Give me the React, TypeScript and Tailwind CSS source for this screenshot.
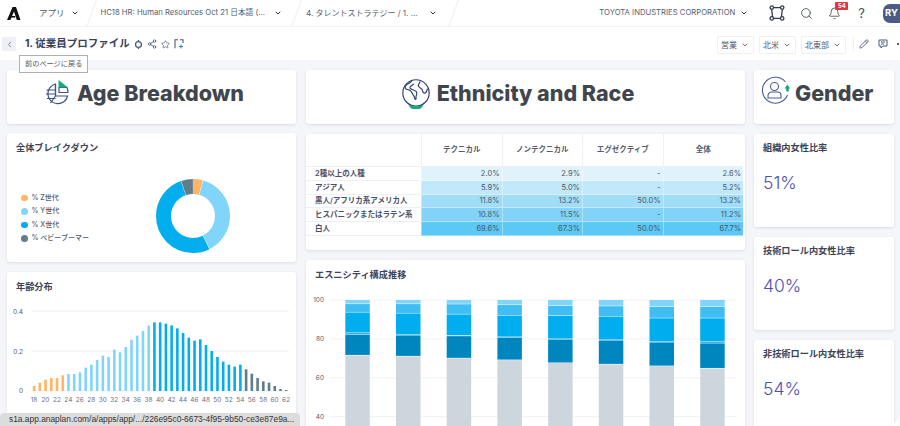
import React from 'react';
import { ChevronDown, ChevronLeft, Search, Bell, Share2, Star, Pencil } from 'lucide-react';

const font = { fontFamily: 'Inter, "Noto Sans CJK JP", sans-serif' };

const ageTops = [346, 336, 327, 322, 322, 314, 310, 310, 305, 291, 282, 268, 255, 259, 237, 245, 229, 207, 195, 181, 165, 155, 155, 159, 164, 173, 187, 201, 210, 206, 223, 241, 259, 273, 282, 288, 282, 296, 309, 322, 332, 336, 346, 355, 358];

const ageColor = (age: number) => {
  if (age < 24) return '#ffb562';
  if (age < 39) return '#81d4fa';
  if (age < 55) return '#03aeef';
  return '#607d8b';
};

const tableRows = [
  { label: '2種以上の人種', bg: 'bg-[#e0f3fc]', values: ['2.0%', '2.9%', '-', '2.6%'] },
  { label: 'アジア人', bg: 'bg-[#c0e8fa]', values: ['5.9%', '5.0%', '-', '5.2%'] },
  { label: '黒人/アフリカ系アメリカ人', bg: 'bg-[#a0ddf8]', values: ['11.8%', '13.2%', '50.0%', '13.2%'] },
  { label: 'ヒスパニックまたはラテン系', bg: 'bg-[#82d3f7]', values: ['10.8%', '11.5%', '-', '11.2%'] },
  { label: '白人', bg: 'bg-[#5cc8f5]', values: ['69.6%', '67.3%', '50.0%', '67.7%'] },
];

// tops of each segment in the stacked chart, read as % values
const stacks = [
  [71.5, 82.2, 83, 93.6, 97.9],
  [71, 81.8, 82, 93.1, 97.9],
  [70, 81.4, 81.6, 92.6, 97.8],
  [69.1, 80.7, 80.9, 92, 97.4],
  [67.6, 79.7, 79.9, 91.9, 97],
  [66.9, 79.2, 79.4, 91.5, 96.8],
  [66, 78.2, 78.4, 90.6, 96.4],
  [64.8, 77.7, 78.4, 90.6, 96.4],
];
const stackColors = ['#ccd6dc', '#0086bf', '#29a8dc', '#00aeef', '#40bdf3', '#81d4fa'];

const kpis = [
  { title: '組織内女性比率', value: '51%' },
  { title: '技術ロール内女性比率', value: '40%' },
  { title: '非技術ロール内女性比率', value: '54%' },
];

const Card = ({ className = '', children }: { className?: string; children?: React.ReactNode }) => (
  <div className={`bg-white rounded-[3px] shadow-[0_1px_3px_rgba(40,50,80,0.12)] ${className}`}>{children}</div>
);

const Slash = () => <div className="w-px h-[27px] bg-[#eceef3] -skew-x-[20deg]" />;

const Logo = () => (
  <svg width="14" height="13" viewBox="0 0 14 13">
    <path d="M5.6 0H9L13.5 13H9.8L7 4.6 3.4 13H0z" fill="#111" />
    <path d="M3.8 9h4.4v1.6H3.8z" fill="#111" />
  </svg>
);

const NetworkIcon = () => (
  <svg width="16" height="16" viewBox="0 0 16 16" fill="none" stroke="#333a4d" strokeWidth="1.3">
    <path d="M4 2.6h8M4 13.4h8M2.6 4l1 8M13.4 4l-1 8" />
    <circle cx="2.8" cy="2.6" r="1.7" />
    <circle cx="13.2" cy="2.6" r="1.7" />
    <circle cx="2.8" cy="13.4" r="1.7" />
    <circle cx="13.2" cy="13.4" r="1.7" />
  </svg>
);

const SyncIcon = () => (
  <svg width="9" height="9" viewBox="0 0 10 10" fill="none" stroke="#4d5a78" strokeWidth="1.4">
    <circle cx="5" cy="5" r="3.3" />
    <path d="M5 0v2M5 8v2" />
  </svg>
);

const BookmarkSpark = () => (
  <svg width="10" height="10" viewBox="0 0 10 10" fill="none" stroke="#4d5a78" strokeWidth="1.1">
    <path d="M4 .8H1v8.4M6 .8h3V4" />
    <path d="M7 5.5v4M5 7.5h4" stroke="#3f7fe0" />
  </svg>
);

const CommentIcon = () => (
  <svg width="10" height="10" viewBox="0 0 10 10" fill="none" stroke="#4d5a78" strokeWidth="1">
    <path d="M1 1h8v6H5L3 9V7H1z" />
    <path d="M3 3h4M3 5h3" />
  </svg>
);

const AgeIcon = () => (
  <svg width="24" height="26" viewBox="0 0 24 26" fill="none" stroke="#3f5288" strokeWidth="1.2" className="mb-[3px]">
    <path d="M10.5 5A10 10 0 1 0 22.6 17H10.5z" />
    <path d="M1.5 11h9M.8 15h9.7M2 19.5h8.5M10.5 5v12M10.5 17l-5 7" />
    <path d="M14 8.5h8A10 10 0 0 1 22.9 13.5H14z" />
    <path d="M13.5 1v7.5H23z" fill="#17a97a" stroke="none" />
  </svg>
);

const GlobeIcon = () => (
  <svg width="28" height="30" viewBox="0 0 26 28" fill="none" stroke="#2e3f76" strokeWidth="1.1">
    <circle cx="13" cy="13" r="12.3" />
    <path d="M9 1.8C8 4 5 4.5 3 6.5c-.7 2 .8 3.3 2.8 3.5 2.2.2 3 1.7 3.8 3.5.5 1.8 2 2.2 2.2 4.5.1 1.3 1.5 1.5 1.2-.5-.3-2.5 1.5-3.500.5-5.500-1.500-2-4.500-1.500-6-3.500C6.500 7 9.500 6 11 4.500" />
    <path d="M17 2.500c-1 1.500-2.500 2.500-1.500 4.500 1 1.500 3 1.500 3.500 3.500.5 1.800 1 3.300 2.500 2.500 1.500-1 2-2.500 2.200-4" />
    <path d="M5.500 23.500c4.500 2.500 10.500 2.500 15 0l-2.500 3.500c-2 2-8 2-10 0z" fill="#17a97a" stroke="none" />
  </svg>
);

const PersonIcon = () => (
  <svg width="29" height="29" viewBox="0 0 29 29" fill="none" stroke="#4a5c96" strokeWidth="1.1" className="mb-[6px]">
    <path d="M26.5 19A13 13 0 1 1 24.5 6" />
    <circle cx="13.5" cy="10.5" r="4" />
    <path d="M7 22v-2.500a3.500 3.500 0 0 1 3.500-3.500h6a3.500 3.500 0 0 1 3.500 3.500V22z" />
    <path d="M23.500 12.500L26.500 8.500l2.500 4h-1.200v3h-2.600v-3z" fill="#17a97a" stroke="none" />
  </svg>
);

const Donut = () => {
  const r = 29.5;
  const c = 2 * Math.PI * r;
  const parts = [
    { color: '#ffb562', from: 0, to: 4.5 },
    { color: '#81d4fa', from: 4.5, to: 42.6 },
    { color: '#03aeef', from: 42.6, to: 94.7 },
    { color: '#607d8b', from: 94.7, to: 100 },
  ];
  return (
    <svg width="76" height="76" viewBox="0 0 76 76" className="-rotate-90">
      {parts.map(p => (
        <circle
          key={p.color}
          cx="38"
          cy="38"
          r={r}
          fill="none"
          stroke={p.color}
          strokeWidth="15"
          strokeDasharray={`${((p.to - p.from) / 100) * c - 0.4} ${c}`}
          strokeDashoffset={-(p.from / 100) * c}
        />
      ))}
    </svg>
  );
};

const AgeChart = () => (
  <svg width="289" height="112" viewBox="0 0 289 112" className="block">
    <g stroke="#f0f1f5" strokeWidth="1">
      <line x1="24" x2="282" y1="11" y2="11" />
      <line x1="24" x2="282" y1="51" y2="51" />
      <line x1="24" x2="282" y1="91" y2="91" />
    </g>
    <g fontSize="6.5" fill="#555c70" textAnchor="end" style={font}>
      <text x="16" y="13.5">0.4</text>
      <text x="16" y="53.5">0.2</text>
      <text x="16" y="93">0</text>
    </g>
    {ageTops.map((top, i) => {
      const h = (361 - top) / 3;
      return <rect key={i} x={25.8 + i * 5.73} y={91 - h} width="2.6" height={h} fill={ageColor(18 + i)} />;
    })}
    <g fontSize="6.5" fill="#6b7280" textAnchor="middle" style={font}>
      {ageTops.map((_, i) =>
        i % 2 === 0 ? (
          <text key={i} x={27 + i * 5.73} y="102">
            {18 + i}
          </text>
        ) : null
      )}
    </g>
  </svg>
);

const StackChart = () => {
  const yOf = (v: number) => 5 + (100 - v) * 1.945;
  return (
    <svg width="439" height="135" viewBox="0 0 439 135" className="block">
      <g stroke="#f0f1f5" strokeWidth="1">
        {[100, 80, 60, 40].map(v => (
          <line key={v} x1="24" x2="431" y1={yOf(v)} y2={yOf(v)} />
        ))}
      </g>
      <g fontSize="6.5" fill="#555c70" textAnchor="end" style={font}>
        {[100, 80, 60, 40].map(v => (
          <text key={v} x="18" y={yOf(v) + 2.3}>
            {v}
          </text>
        ))}
      </g>
      {stacks.map((tops, i) => {
        const x = 39.3 + i * 50.7;
        const edges = [-30, ...tops, 100];
        return edges.slice(0, -1).map((from, j) => {
          const y1 = yOf(edges[j + 1]);
          const y2 = yOf(from);
          return <rect key={`${i}-${j}`} x={x} y={y1} width="24.5" height={y2 - y1 - 0.5} fill={stackColors[j]} />;
        });
      })}
    </svg>
  );
};

const App = () => {
  return (
    <div className="relative w-[900px] h-[426px] overflow-hidden rounded-br-[14px] bg-[#f5f6fa] text-[#3d4457]" style={font}>
      {/* top bar */}
      <div className="flex items-center h-[27px] bg-white border-b border-[#f1f2f6] pl-[7px] text-[#555c6e]">
        <div className="w-[32px]">
          <Logo />
        </div>
        <div className="flex items-center w-[52px] text-[8.5px]">
          <span>アプリ</span>
          <ChevronDown className="ml-[6px] w-[8px] h-[8px] text-[#333]" strokeWidth={3} />
        </div>
        <Slash />
        <div className="flex items-center ml-[8.5px] w-[195px] text-[7.7px]">
          <span className="whitespace-nowrap">HC18 HR: Human Resources Oct 21 日本語 (...</span>
          <ChevronDown className="ml-auto mr-[14px] w-[8px] h-[8px] text-[#333]" strokeWidth={3} />
        </div>
        <Slash />
        <div className="flex items-center ml-[9.5px] w-[147px] text-[8px]">
          <span className="whitespace-nowrap">4. タレントストラテジー / 1. ...</span>
          <ChevronDown className="ml-auto mr-[16px] w-[8px] h-[8px] text-[#333]" strokeWidth={3} />
        </div>
        <Slash />
        <div className="flex items-center ml-auto text-[7.7px]">
          <span className="whitespace-nowrap">TOYOTA INDUSTRIES CORPORATION</span>
          <ChevronDown className="ml-[5px] w-[8px] h-[8px] text-[#333]" strokeWidth={3} />
        </div>
        <div className="flex items-center ml-[21px]">
          <NetworkIcon />
          <Search className="ml-[15px] w-[13px] h-[13px] text-[#444b5c]" strokeWidth={1.6} />
          <div className="relative ml-[15px]">
            <Bell className="w-[13px] h-[13px] text-[#444b5c]" strokeWidth={1.6} />
            <span className="absolute left-[7px] -top-[5px] w-[13px] h-[8px] bg-[#e5323b] rounded-[1px] text-white text-[6px] font-bold leading-[8px] text-center">54</span>
          </div>
          <span className="ml-[17px] text-[13px] text-[#444b5c] leading-none">?</span>
          <div className="ml-[18px] -mr-[5px] w-[22px] h-[19px] rounded-[7px] bg-[#4b5b85] text-white text-[9.5px] font-bold flex items-center pl-[2px]">RY</div>
        </div>
      </div>

      {/* page title bar */}
      <div className="flex items-center h-[33px] bg-white pl-[2px] pt-[1px]">
        <div className="flex items-center justify-center w-[14px] h-[14px] bg-[#eef0f6] rounded-[1px]">
          <ChevronLeft className="w-[9px] h-[9px] text-[#667]" />
        </div>
        <span className="ml-[9px] text-[10.5px] font-bold text-[#39405a]">1. 従業員プロファイル</span>
        <div className="flex items-center ml-[4.5px] gap-[4px] text-[#4d5a78]">
          <SyncIcon />
          <Share2 className="w-[10px] h-[10px]" strokeWidth={2} />
          <Star className="w-[9px] h-[9px]" strokeWidth={1.8} />
          <BookmarkSpark />
        </div>
        <div className="flex items-center ml-auto pr-[1px] gap-[5px] text-[8px] text-[#4d5a78]">
          {[
            { name: '営業', width: 'w-[37px]' },
            { name: '北米', width: 'w-[37px]' },
            { name: '北東部', width: 'w-[45px]' },
          ].map(f => (
            <div key={f.name} className={`flex items-center justify-center h-[18px] mt-[1px] border border-[#eef0f6] rounded-[1px] ${f.width}`}>
              <span>{f.name}</span>
              <ChevronDown className="ml-[4px] w-[8px] h-[8px]" strokeWidth={2.5} />
            </div>
          ))}
          <div className="ml-[2px] w-px h-[14px] bg-[#eef0f6]" />
          <Pencil className="ml-[0.5px] w-[10px] h-[10px]" />
          <div className="ml-[4px] flex items-center gap-[9px]">
            <CommentIcon />
            <div className="w-[2px] h-[1.5px] bg-[#4d5a78]" />
          </div>
        </div>
      </div>

      {/* dashboard columns */}
      <div className="flex pl-[7px] pt-[10px]">
        <div className="flex flex-col w-[289px] gap-[9px]">
          <Card className="flex items-center justify-center gap-[8px] h-[54px] pb-[7px] pr-[14px]">
            <AgeIcon />
            <h2 className="text-[21.5px] font-extrabold text-[#41464d]">Age Breakdown</h2>
          </Card>
          <Card className="h-[129px] px-[9px] pt-[8px]">
            <h3 className="text-[9.2px] leading-[14px] font-semibold">全体ブレイクダウン</h3>
            <div className="flex items-start">
              <div className="flex flex-col gap-[6.5px] pl-[5px] mt-[39.5px] w-[140px] text-[7px] font-medium text-[#555c6e]">
                {[
                  ['bg-[#ffb562]', '% Z世代'],
                  ['bg-[#81d4fa]', '% Y世代'],
                  ['bg-[#03aeef]', '% X世代'],
                  ['bg-[#607d8b]', '% ベビーブーマー'],
                ].map(([dot, label]) => (
                  <div key={label} className="flex items-center gap-[4px] h-[7px]">
                    <span className={`shrink-0 w-[6.5px] h-[6.5px] rounded-full ${dot}`} />
                    <span>{label}</span>
                  </div>
                ))}
              </div>
              <div className="ml-[-1px] mt-[23px]">
                <Donut />
              </div>
            </div>
          </Card>
          <Card className="flex-1 h-[160px] mt-[1px]">
            <h3 className="px-[9px] pt-[8px] pb-[5.5px] text-[9.2px] leading-[14px] font-semibold">年齢分布</h3>
            <AgeChart />
          </Card>
        </div>

        <div className="flex flex-col w-[439px] ml-[10px] gap-[10px]">
          <Card className="flex items-center justify-center gap-[7px] h-[54px] pb-[7px] pr-[15px]">
            <GlobeIcon />
            <h2 className="text-[21.5px] font-extrabold text-[#41464d]">Ethnicity and Race</h2>
          </Card>
          <Card className="h-[116px]">
            <div className="grid grid-cols-[115px_repeat(4,80.5px)] grid-rows-[33px_repeat(5,13.8px)] text-[7.5px]">
              <div className="border-b border-[#eef0f6]" />
              {['テクニカル', 'ノンテクニカル', 'エグゼクティブ', '全体'].map(h => (
                <div key={h} className="flex items-center justify-center font-semibold text-[#555c6e] border-l border-b border-[#eef0f6]">
                  {h}
                </div>
              ))}
              {tableRows.map(row => (
                <React.Fragment key={row.label}>
                  <div className="flex items-center pl-[9px] font-semibold text-[#4a5068] border-b border-[#eef0f6] whitespace-nowrap">{row.label}</div>
                  {row.values.map((v, i) => (
                    <div key={i} className={`flex items-center justify-end pr-[2px] text-[#4b5666] border-l border-b border-white/40 ${row.bg}`}>
                      {v}
                    </div>
                  ))}
                </React.Fragment>
              ))}
            </div>
          </Card>
          <Card className="h-[170px]">
            <h3 className="px-[9px] pt-[8px] pb-[12.5px] text-[9.2px] leading-[14px] font-semibold">エスニシティ構成推移</h3>
            <StackChart />
          </Card>
        </div>

        <div className="flex flex-col w-[140px] ml-[9px] gap-[9.5px]">
          <Card className="flex items-center gap-[5px] h-[54px] pl-[7px] pb-[7px]">
            <PersonIcon />
            <h2 className="text-[21.5px] font-extrabold text-[#41464d]">Gender</h2>
          </Card>
          {kpis.map(k => (
            <Card key={k.title} className="h-[93.5px] shrink-0 px-[9px] pt-[7px]">
              <h3 className="text-[9.2px] leading-[14px] font-semibold whitespace-nowrap">{k.title}</h3>
              <p className="mt-[14px] text-[17.5px] leading-[28px] font-light text-[#5050b2]">{k.value}</p>
            </Card>
          ))}
        </div>
      </div>

      {/* back tooltip */}
      <div className="absolute left-[19px] top-[55px] h-[18px] px-[5px] flex items-center bg-white border border-[#b0b0b0] text-[7.2px] text-[#555]">
        前のページに戻る
      </div>

      {/* browser link status */}
      <div className="absolute left-0 bottom-0 w-[300px] h-[13px] bg-[#dcdcdc] rounded-t-[4px] pl-[9px] font-['Liberation_Sans'] text-[8.4px] leading-[13px] text-[#333] whitespace-nowrap overflow-hidden">
        s1a.app.anaplan.com/a/apps/app/.../226e95c0-6673-4f95-9b50-ce3e87e9a...
      </div>
    </div>
  );
};

export default App;
